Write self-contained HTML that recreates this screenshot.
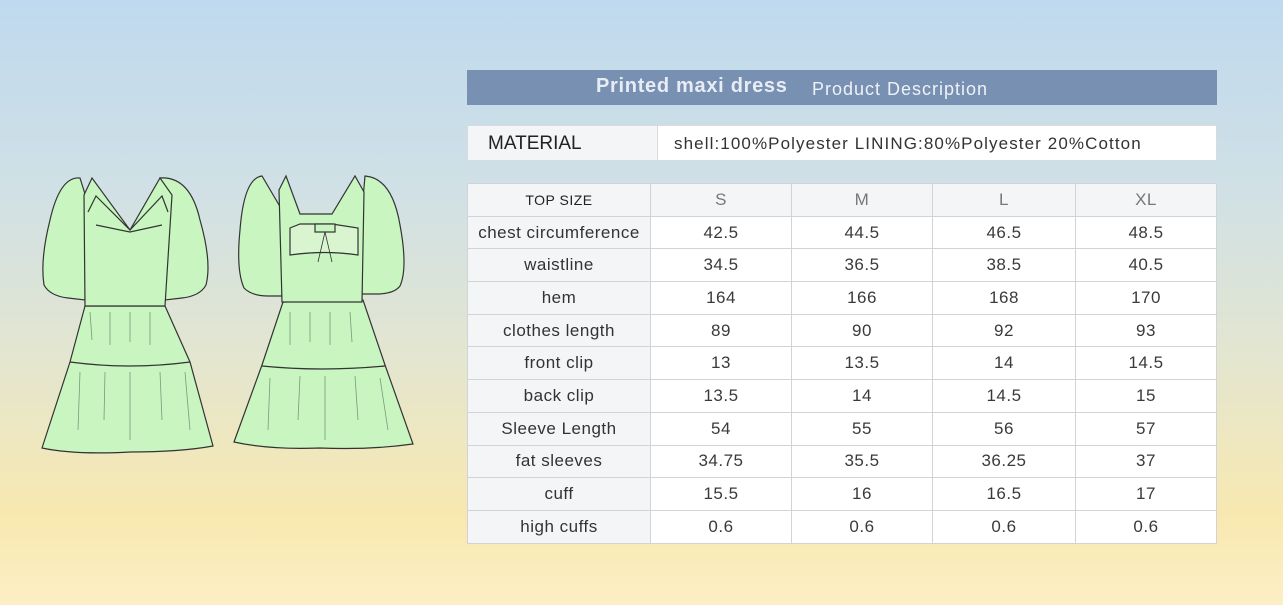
<!DOCTYPE html>
<html><head><meta charset="utf-8"><style>
body{margin:0;width:1283px;height:605px;overflow:hidden;font-family:"Liberation Sans",sans-serif;
background:linear-gradient(180deg,#bfd9ee 0%,#cfe0e6 30%,#e4e6cf 60%,#f8e8b0 85%,#fcefc4 100%);position:relative}
.band{position:absolute;left:467px;top:70px;width:750px;height:35px;background:#7890b2;color:#eef2f8}
.band .a{position:absolute;left:129px;top:5px;font-size:20px;letter-spacing:0.7px;font-weight:bold;color:#e8edf5}
.band .b{position:absolute;left:345px;top:9px;font-size:18px;letter-spacing:1px}
.mat{position:absolute;left:467px;top:125px;width:748px;height:34px;border:1px solid #d6dbe0;background:#fff;font-size:17px;color:#333}
.mat .l{position:absolute;left:0;top:0;width:189px;height:34px;background:#f3f5f7;border-right:1px solid #d6dbe0}
.mat .l span{position:absolute;left:20px;top:7px;font-size:19px;color:#222}
.mat .r{position:absolute;left:206px;top:8px;letter-spacing:1.1px}
table{position:absolute;left:467px;top:183px;border-collapse:collapse;background:#fff}
td{border:1px solid #d0d4d8;text-align:center;font-size:17px;color:#3a3a3a;padding:0;height:31.7px;letter-spacing:0.5px}
tr:first-child td{background:#f3f5f7;color:#777;font-size:17px}
tr:first-child td:first-child{color:#222;font-size:14px}
td:first-child{width:182px;background:#f3f5f7;color:#333}
</style></head><body>
<div class="band"><span class="a">Printed maxi dress</span><span class="b">Product Description</span></div>
<div class="mat"><div class="l"><span>MATERIAL</span></div><div class="r">shell:100%Polyester LINING:80%Polyester 20%Cotton</div></div>
<table>
<tr><td>TOP SIZE</td><td style="width:140px">S</td><td style="width:140px">M</td><td style="width:142px">L</td><td style="width:140px">XL</td></tr>
<tr><td>chest circumference</td><td>42.5</td><td>44.5</td><td>46.5</td><td>48.5</td></tr>
<tr><td>waistline</td><td>34.5</td><td>36.5</td><td>38.5</td><td>40.5</td></tr>
<tr><td>hem</td><td>164</td><td>166</td><td>168</td><td>170</td></tr>
<tr><td>clothes length</td><td>89</td><td>90</td><td>92</td><td>93</td></tr>
<tr><td>front clip</td><td>13</td><td>13.5</td><td>14</td><td>14.5</td></tr>
<tr><td>back clip</td><td>13.5</td><td>14</td><td>14.5</td><td>15</td></tr>
<tr><td>Sleeve Length</td><td>54</td><td>55</td><td>56</td><td>57</td></tr>
<tr><td>fat sleeves</td><td>34.75</td><td>35.5</td><td>36.25</td><td>37</td></tr>
<tr><td>cuff</td><td>15.5</td><td>16</td><td>16.5</td><td>17</td></tr>
<tr><td>high cuffs</td><td>0.6</td><td>0.6</td><td>0.6</td><td>0.6</td></tr>
</table>
<svg style="position:absolute;left:0;top:0" width="440" height="460" fill="#c8f5c0" stroke="#333" stroke-width="1.2">
<path d="M80 178 Q60 176 50 220 Q40 260 44 285 Q50 296 68 298 L85 300 L90 210 Z"/>
<path d="M160 178 Q190 176 200 220 Q212 262 206 285 Q200 296 182 298 L165 300 L170 210 Z"/>
<path d="M85 306 L70 362 L42 448 Q75 455 130 452 Q180 452 213 446 L190 362 L165 306 Z"/>
<path d="M70 362 Q130 370 190 362" fill="none"/>
<path d="M84 195 L92 178 L130 230 L160 178 L172 195 L165 306 L85 306 Z"/>
<path d="M88 212 L96 196 L130 230 L162 196 L168 212 M96 225 L130 232 L162 225" fill="none"/>
<path d="M90 312 L92 340 M110 312 L110 345 M130 312 L130 342 M150 312 L150 345 M80 372 L78 430 M105 372 L104 420 M130 372 L130 440 M160 372 L162 420 M185 372 L190 430" fill="none" stroke="#7a9a7a" stroke-width="0.8"/>
<path d="M262 176 Q244 178 240 230 Q236 270 244 288 Q252 296 268 296 L282 296 L282 210 Z"/>
<path d="M365 176 Q392 178 400 225 Q408 268 400 286 Q394 294 376 294 L362 294 L362 210 Z"/>
<path d="M283 302 L262 365 L234 442 Q270 450 320 448 Q370 450 413 444 L385 365 L363 300 Z"/>
<path d="M262 366 Q322 372 385 366" fill="none"/>
<path d="M279 190 L286 176 L300 214 L332 214 L355 176 L364 192 L362 302 L282 302 Z"/>
<path d="M290 255 Q325 250 358 255 L358 228 L332 224 L300 224 L290 228 Z" fill="#d8f5d0"/>
<rect x="315" y="224" width="20" height="8"/>
<path d="M325 232 L318 262 M325 232 L332 262" fill="none" stroke-width="0.8"/>
<path d="M290 312 L290 345 M310 312 L310 342 M330 312 L330 345 M350 312 L352 342 M270 378 L268 430 M300 376 L298 420 M325 376 L325 440 M355 376 L358 420 M380 378 L388 430" fill="none" stroke="#7a9a7a" stroke-width="0.8"/>
</svg>
</body></html>
